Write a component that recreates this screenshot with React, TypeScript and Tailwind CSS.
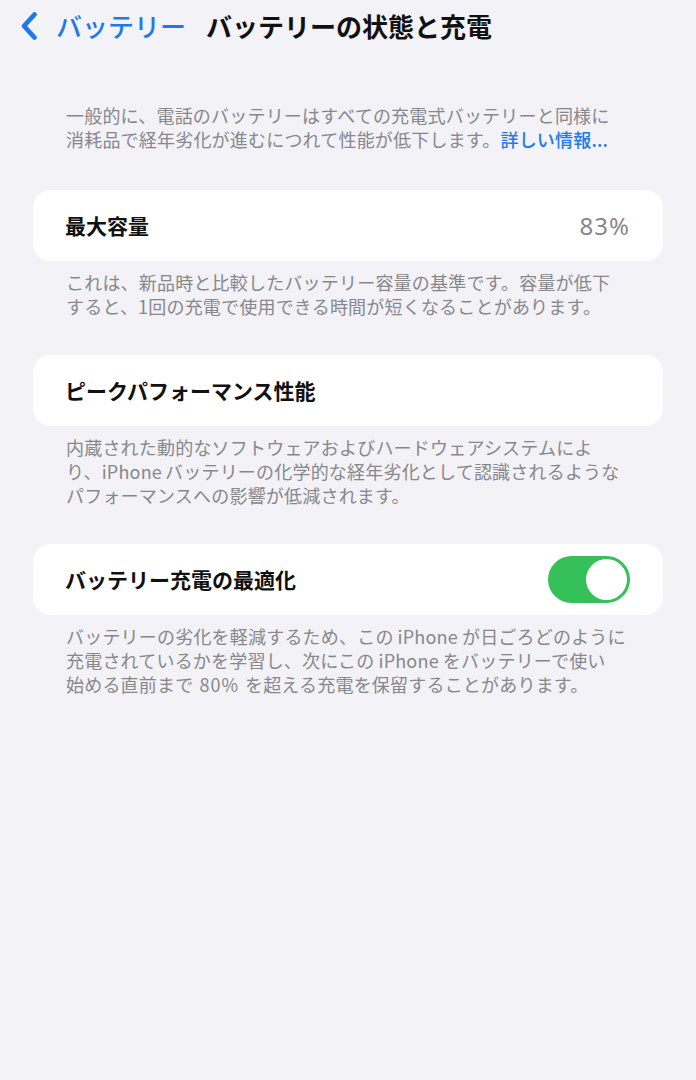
const font = {
  fontFamily: "'Noto Sans CJK JP', 'Noto Sans', sans-serif",
}

function Card({ children }: { children: React.ReactNode }) {
  return (
    <div className="mx-[33px] h-[71px] rounded-[18px] bg-white pl-[32px] pr-[33px] flex items-center justify-between">
      {children}
    </div>
  )
}

function Footnote({ lines }: { lines: React.ReactNode[] }) {
  return (
    <div className="mt-[9px] pl-[66px] text-[18px] leading-[24px] tracking-[0.2px] text-[#87878c] whitespace-nowrap">
      {lines.map((line, i) => (
        <div key={i}>{line}</div>
      ))}
    </div>
  )
}

// Latin runs inside Japanese text get a little breathing room
function Latin({ children, wide }: { children: React.ReactNode; wide?: boolean }) {
  return <span className={wide ? 'mx-[6px] tracking-[1px]' : 'mx-[4px]'}>{children}</span>
}

function Toggle() {
  return (
    <div className="w-[82px] h-[47px] rounded-full bg-[#35c05a] p-[3px] flex justify-end">
      <div className="w-[41px] h-[41px] rounded-full bg-white" />
    </div>
  )
}

export default function App() {
  return (
    <div className="min-h-[1080px] bg-[#f2f2f7] text-[#111]" style={font}>
      {/* Navigation bar */}
      <div className="h-[52px] flex items-center pl-[20px]">
        <svg width="18" height="30" viewBox="0 0 18 30" className="mr-[18px]">
          <path
            d="M14.5 3.5 L4 15 L14.5 26.5"
            fill="none"
            stroke="#1f7ae8"
            strokeWidth="4.8"
            strokeLinecap="round"
            strokeLinejoin="round"
          />
        </svg>
        <span className="text-[26px] leading-none text-[#1f7ae8] font-medium">バッテリー</span>
        <span className="ml-[20px] text-[26px] leading-none font-bold">バッテリーの状態と充電</span>
      </div>

      {/* Intro */}
      <div className="mt-[51px] pl-[66px] text-[18px] leading-[24px] tracking-[0.2px] text-[#87878c] whitespace-nowrap">
        <div>一般的に、電話のバッテリーはすべての充電式バッテリーと同様に</div>
        <div>
          消耗品で経年劣化が進むにつれて性能が低下します。
          <span className="text-[#1f7ae8] font-medium">詳しい情報...</span>
        </div>
      </div>

      <div className="mt-[39px]">
        <Card>
          <span className="text-[21px] font-semibold">最大容量</span>
          <span
            className="text-[24px] tracking-[1px] text-[#86868b]"
            style={{ fontFamily: "'Noto Sans', sans-serif" }}
          >
            83%
          </span>
        </Card>
        <Footnote
          lines={[
            'これは、新品時と比較したバッテリー容量の基準です。容量が低下',
            'すると、1回の充電で使用できる時間が短くなることがあります。',
          ]}
        />
      </div>

      <div className="mt-[37px]">
        <Card>
          <span className="text-[21px] font-semibold">ピークパフォーマンス性能</span>
        </Card>
        <Footnote
          lines={[
            '内蔵された動的なソフトウェアおよびハードウェアシステムによ',
            <>
              り、<span className="mr-[3px]">iPhone</span>バッテリーの化学的な経年劣化として認識されるような
            </>,
            'パフォーマンスへの影響が低減されます。',
          ]}
        />
      </div>

      <div className="mt-[37px]">
        <Card>
          <span className="text-[21px] font-semibold">バッテリー充電の最適化</span>
          <Toggle />
        </Card>
        <Footnote
          lines={[
            <>
              バッテリーの劣化を軽減するため、この<Latin>iPhone</Latin>が日ごろどのように
            </>,
            <>
              充電されているかを学習し、次にこの<Latin>iPhone</Latin>をバッテリーで使い
            </>,
            <>
              始める直前まで<Latin wide>80%</Latin>を超える充電を保留することがあります。
            </>,
          ]}
        />
      </div>
    </div>
  )
}
